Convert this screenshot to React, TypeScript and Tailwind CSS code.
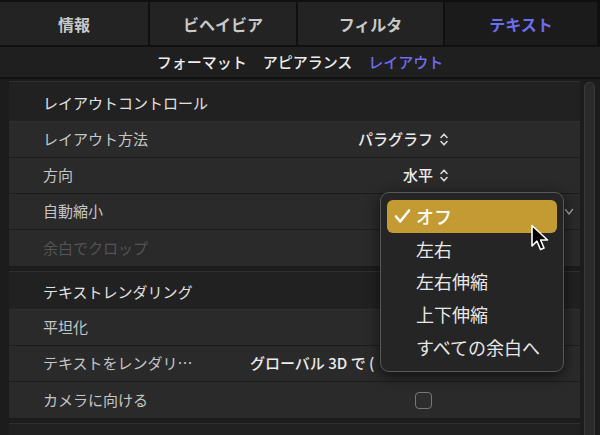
import React from "react";

const font = "font-['Noto_Sans_CJK_JP','Noto_Sans_CJK_SC',sans-serif]";

function UpDown() {
  return (
    <svg width="10" height="15" viewBox="0 0 10 15" className="ml-[6px] shrink-0">
      <path d="M2 5.5 L5 2.2 L8 5.5" fill="none" stroke="#d8d8d8" strokeWidth="1.6" strokeLinecap="round" strokeLinejoin="round" />
      <path d="M2 9.5 L5 12.8 L8 9.5" fill="none" stroke="#d8d8d8" strokeWidth="1.6" strokeLinecap="round" strokeLinejoin="round" />
    </svg>
  );
}

function Header({ label, h }: { label: string; h: string }) {
  return (
    <div className={h + " border-t border-[#2f2f2f] bg-[#212121] flex items-center pl-[34px] pt-[3px] border-b border-[#1b1b1b]"}>
      <span className="text-[15px] text-[#e2e2e2]">{label}</span>
    </div>
  );
}

function Row({ label, dim, children, last }: { label: string; dim?: boolean; children?: React.ReactNode; last?: boolean }) {
  return (
    <div className={"h-[36px] bg-[#2a2a2a] flex items-center pl-[34px] " + (last ? "" : "border-b border-[#1c1c1c]")}>
      <span className={"w-[207px] shrink-0 text-[15px] " + (dim ? "text-[#545454]" : "text-[#c6c6c6]")}>{label}</span>
      <div className="flex-1 flex items-center h-full">{children}</div>
    </div>
  );
}

function PopValue({ text }: { text: string }) {
  return (
    <div className="w-[199px] flex items-center justify-end">
      <span className="text-[15px] font-medium text-[#ececec]">{text}</span>
      <UpDown />
    </div>
  );
}

export default function App() {
  const tabs = [
    { t: "情報", w: "w-[150px] border-r-2", sel: false },
    { t: "ビヘイビア", w: "w-[148px] border-r-2", sel: false },
    { t: "フィルタ", w: "w-[147px] border-r-2", sel: false },
    { t: "テキスト", w: "w-[155px] border-r-[3px]", sel: true },
  ];
  return (
    <div className={"relative w-[600px] h-[435px] overflow-hidden bg-[#1c1c1c] " + font}>
      {/* tab bar */}
      <div className="flex h-[47px] border-b-2 border-t-2 border-[#101010]">
        {tabs.map((x) => (
          <div
            key={x.t}
            className={
              x.w +
              " border-[#101010] flex items-center justify-center text-[16px] font-semibold " +
              (x.sel ? "bg-[#1b1b1b] text-[#6d6df0]" : "bg-[#232323] text-[#c9c9c9]")
            }
          >
            {x.t}
          </div>
        ))}
      </div>
      {/* sub tabs */}
      <div className="h-[32px] bg-[#1f1f1f] border-b-2 border-[#121212] flex items-center justify-center gap-4 text-[15px] font-medium">
        <span className="text-[#ededed]">フォーマット</span>
        <span className="text-[#ededed]">アピアランス</span>
        <span className="text-[#6d6df0]">レイアウト</span>
      </div>
      {/* panel */}
      <div className="flex mt-[2px]">
        <div className="w-[9px] shrink-0" />
        <div className="w-[571px] shrink-0">
          <Header label="レイアウトコントロール" h="h-[41px]" />
          <Row label="レイアウト方法">
            <PopValue text="パラグラフ" />
          </Row>
          <Row label="方向">
            <PopValue text="水平" />
          </Row>
          <Row label="自動縮小">
            <div className="flex-1" />
            <svg width="10" height="8" viewBox="0 0 10 8" className="mr-[6px]">
              <path d="M1.5 1.5 L5 6 L8.5 1.5" fill="none" stroke="#9a9a9a" strokeWidth="1.5" strokeLinecap="round" />
            </svg>
          </Row>
          <Row label="余白でクロップ" dim last />
          <div className="h-[5px]" />
          <Header label="テキストレンダリング" h="h-[39px]" />
          <Row label="平坦化" />
          <Row label="テキストをレンダリ…">
            <span className="text-[15px] font-medium text-[#ececec] whitespace-nowrap">グローバル 3D で (</span>
          </Row>
          <Row label="カメラに向ける" last>
            <div className="ml-[165px] w-[17px] h-[17px] rounded-[4px] border-[1.5px] border-[#777] bg-[#2d2d2d]" />
          </Row>
          <div className="h-[5px]" />
          <div className="h-[20px] border-t border-[#2f2f2f] bg-[#212121]" />
        </div>
        <div className="w-[4px] shrink-0" />
        <div className="w-[11px] shrink-0 h-[360px] rounded-t-[5px] border border-[#3a3a3a] bg-[#2a2a2a] mt-[1px]" />
      </div>

      {/* dropdown menu */}
      <div className="absolute left-[380px] top-[192px] w-[184px] h-[180px] rounded-[9px] border-[1.5px] border-[#585858] bg-[#252525] shadow-[0_4px_14px_rgba(0,0,0,0.6)] px-[6px] py-[7px] flex flex-col">
        <div className="h-[33px] rounded-[6px] bg-[#c49a33] flex items-center pl-[7px] text-white text-[18px] font-medium">
          <svg width="17" height="16" viewBox="0 0 17 16" className="mr-[5px]">
            <path d="M2 8.5 L6.2 13.5 L15 2.5" fill="none" stroke="#fff" strokeWidth="2.6" strokeLinecap="round" strokeLinejoin="round" />
          </svg>
          オフ
        </div>
        {["左右", "左右伸縮", "上下伸縮", "すべての余白へ"].map((m) => (
          <div key={m} className="h-[33px] flex items-center pl-[29px] text-[18px] text-[#e8e8e8]">
            {m}
          </div>
        ))}
      </div>

      {/* cursor */}
      <svg className="absolute left-[530px] top-[224px]" width="22" height="30" viewBox="0 0 22 30">
        <path d="M2 1.5 L2 22 L7 17.2 L10.5 25.5 L14 24 L10.6 16 L17.5 16 Z" fill="#000" stroke="#fff" strokeWidth="1.6" strokeLinejoin="round" />
      </svg>
    </div>
  );
}
